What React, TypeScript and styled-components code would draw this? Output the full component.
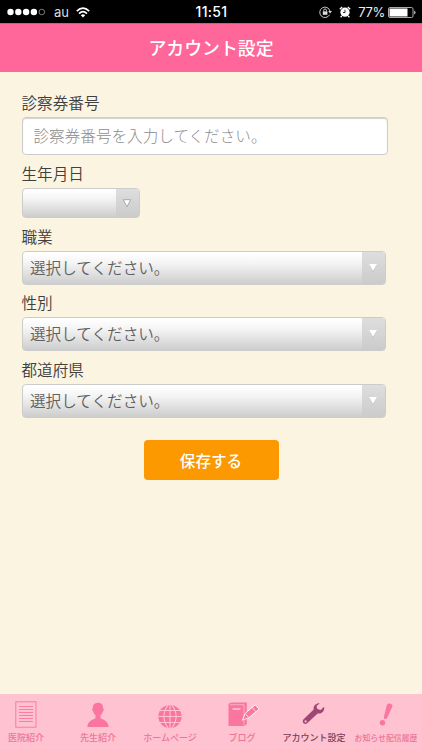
import React from 'react';
import styled, { createGlobalStyle } from 'styled-components';

const GlobalStyle = createGlobalStyle`
  * { box-sizing: border-box; }
  html, body { margin: 0; padding: 0; }
  body { background: #faf4e0; font-family: "Noto Sans CJK JP", sans-serif; }
`;

const Screen = styled.div`
  width: 422px;
  height: 750px;
  display: flex;
  flex-direction: column;
  overflow: hidden;
  background: #faf4e0;
`;

const StatusBar = styled.div`
  height: 23px;
  flex: none;
  display: grid;
  grid-template-columns: 1fr auto 1fr;
  align-items: center;
  padding: 1px 6px 0 7px;
  background: #000;
  color: #fff;
  font: 13px/20px Inter, "Liberation Sans", sans-serif;
`;

const StatusGroup = styled.div<{ $end?: boolean }>`
  display: flex;
  align-items: center;
  justify-content: ${(p) => (p.$end ? 'flex-end' : 'flex-start')};
`;

const Carrier = styled.span`
  margin: 0 7px 0 8px;
  font-size: 13px;
  color: #ddd;
`;

const Clock = styled.span`
  font-size: 14px;
  font-weight: 500;
  letter-spacing: 0.3px;
`;

const AlarmSlot = styled.span`
  display: flex;
  margin-left: 7px;
`;

const Percent = styled.span`
  margin: 0 3px 0 7px;
  font-size: 13px;
  color: #eee;
  letter-spacing: -0.3px;
`;

const Header = styled.header`
  height: 49px;
  flex: none;
  display: flex;
  align-items: center;
  justify-content: center;
  padding-bottom: 2px;
  background: #ff6699;
  border-top: 1px solid #d9577f;
`;

const Title = styled.h1`
  margin: 0;
  color: #fff;
  font-size: 17.9px;
  line-height: 26px;
  font-weight: 500;
`;

const Form = styled.main`
  flex: 1;
  display: flex;
  flex-direction: column;
  align-items: flex-start;
  padding: 18px 21.5px 0;
`;

const Label = styled.label<{ $gap?: number }>`
  height: 27px;
  margin-top: ${(p) => p.$gap ?? 0}px;
  font-size: 15.6px;
  line-height: 25px;
  font-weight: 350;
  color: #404040;
`;

const TextInput = styled.input`
  width: 366px;
  height: 38px;
  padding: 0 11px 2px;
  border: 1px solid #ccc;
  border-radius: 4px;
  outline: none;
  background: #fff;
  box-shadow: inset 0 1px 1px #d2d2d0;
  font: 300 15.6px/24px "Noto Sans CJK JP", sans-serif;
  color: #444;
  &::placeholder { color: #8c8c8c; opacity: 1; }
`;

const SelectBox = styled.div<{ $width: number; $height: number }>`
  width: ${(p) => p.$width}px;
  height: ${(p) => p.$height}px;
  display: flex;
  justify-content: space-between;
  overflow: hidden;
  border: 1px solid #ccc;
  border-radius: 4px;
  background: linear-gradient(#fff 5%, #f4f4f4 35%, #cdcdcd);
`;

const SelectText = styled.span`
  padding-left: 7.5px;
  font-size: 15.6px;
  line-height: 31px;
  font-weight: 350;
  color: #606060;
`;

const SelectArrow = styled.span`
  width: 23px;
  display: flex;
  align-items: center;
  justify-content: center;
  padding-right: 1px;
  background: linear-gradient(#dedede, #cbcbcb);
`;

const SaveButton = styled.button`
  width: 135px;
  height: 40px;
  margin: 22px 0 0 122px;
  padding: 0 0 1px;
  border: 0;
  border-radius: 4px;
  background: #fc9800;
  color: #fff;
  font: 500 15.6px/38px "Noto Sans CJK JP", sans-serif;
`;

const TabBar = styled.nav`
  height: 56px;
  flex: none;
  display: grid;
  grid-template-columns: repeat(6, 72px);
  margin-left: -10px;
  background: #ffc2d1;
`;

const Tab = styled.div<{ $active?: boolean }>`
  display: flex;
  flex-direction: column;
  align-items: center;
  color: ${(p) => (p.$active ? '#9c4873' : '#fa75a0')};
`;

const TabIcon = styled.div`
  height: 37px;
  padding-top: 7px;
  svg { display: block; }
`;

const TabLabel = styled.span<{ $size?: number; $active?: boolean }>`
  font-size: ${(p) => p.$size ?? 9}px;
  line-height: 13px;
  font-weight: 500;
  white-space: nowrap;
  color: ${(p) => (p.$active ? '#783e56' : '#ec7599')};
`;

const Signal = () => (
  <svg width="39" height="8" viewBox="0 0 39 8">
    {[3.5, 11.3, 19.1, 26.9].map((x) => <circle key={x} cx={x} cy="4" r="3.2" fill="#fff" />)}
    <circle cx="34.8" cy="4" r="2.8" fill="none" stroke="#aaa" strokeWidth=".7" />
  </svg>
);

const Wifi = () => (
  <svg width="14" height="11" viewBox="0 0 14 11" fill="none" stroke="#fff" strokeWidth="1.7">
    <path d="M.8 4.2Q7-2 13.2 4.2M3 6.6Q7 2.8 11 6.6" />
    <path d="M4.8 8.2Q7 6.2 9.2 8.2L7 10.5Z" fill="#fff" stroke="none" />
  </svg>
);

const RotationLock = () => (
  <svg width="13" height="12" viewBox="0 0 13 12" fill="none" stroke="#ddd">
    <path d="M10.6 8.7A5.2 5.2 0 1 1 11 5" strokeWidth=".9" />
    <path d="M9.3 5h3.6L11.1 7.4Z" fill="#ddd" stroke="none" />
    <path d="M4.7 5.7V4.4a1.4 1.4 0 0 1 2.8 0v1.3" strokeWidth=".9" />
    <rect x="3.8" y="5.4" width="4.6" height="3.4" fill="#ddd" stroke="none" />
  </svg>
);

const Alarm = () => (
  <svg width="12" height="12" viewBox="0 0 12 12">
    <circle cx="6" cy="6.2" r="4.6" fill="#fff" />
    <path d="M.8 3.2 3.2 1M11.2 3.2 8.8 1M2.8 10 1.6 11.3M9.2 10l1.2 1.3" stroke="#fff" strokeWidth="1.3" />
    <path d="M6 3.7v2.8H4" fill="none" stroke="#111" strokeWidth=".9" />
  </svg>
);

const Battery = () => (
  <svg width="28" height="11" viewBox="0 0 28 11">
    <rect x=".5" y=".5" width="24.5" height="10" rx="1.5" fill="none" stroke="#aaa" />
    <rect x="1.5" y="1.5" width="18" height="8" fill="#fff" />
    <path d="M26 3.6q1.6.4 1.6 1.9T26 7.4Z" fill="#aaa" />
  </svg>
);

const Triangle = ({ outlined }: { outlined?: boolean }) => (
  <svg width="10" height="10" viewBox="0 0 10 10">
    {outlined ? (
      <path d="M1.3 1.7h7.4L5 8.7Z" fill="#fff" stroke="#999" strokeWidth=".8" />
    ) : (
      <>
        <path d="M1.2 1.4h7.6L5 8.9Z" fill="#b2b2b2" />
        <path d="M1 1h8L5 7.9Z" fill="#fff" />
      </>
    )}
  </svg>
);

const DocumentIcon = () => (
  <svg width="22" height="28" viewBox="0 0 22 28" fill="none" stroke="currentColor">
    <rect x=".8" y=".8" width="20.2" height="25.4" strokeWidth=".9" />
    <path d="M4 5.5h14M4 8.5h14M4 11.5h14M4 14.5h14M4 17.5h14M4 20.5h14" strokeWidth=".9" />
  </svg>
);

const PersonIcon = () => (
  <svg width="22" height="28" viewBox="0 0 22 28" fill="currentColor">
    <path d="M11 1.8C7.6 1.8 5.7 4 5.9 7.2c-1.1.5-.8 2.6.3 3.2.5 1.8 1.4 3 2.3 3.9v2.6C6.7 18.7.5 19.1.4 26h21.2c-.1-6.9-6.3-7.3-8.1-9.1v-2.6c.9-.9 1.8-2.1 2.3-3.9 1.1-.6 1.4-2.7.3-3.2C16.3 4 14.4 1.8 11 1.8Z" />
  </svg>
);

const GlobeIcon = () => (
  <svg width="24" height="28" viewBox="0 0 24 28">
    <circle cx="12" cy="15.5" r="11.6" fill="currentColor" />
    <path d="M12 3.9v23.2M.4 15.5h23.2M2 9.5h20M2 21.5h20M10.2 3.9Q1.5 15.5 10.2 27.1M13.8 3.9Q22.5 15.5 13.8 27.1" fill="none" stroke="#ffc2d1" strokeWidth="1.1" />
  </svg>
);

const BlogIcon = () => (
  <svg width="36" height="28" viewBox="0 0 36 28">
    <path d="M5.5 2 8 1.5h14.8v21.7L20.5 25H4.5V3.5Z" fill="currentColor" />
    <path d="M6 3.7h14v21" fill="none" stroke="#ffc2d1" strokeWidth=".7" />
    <path d="M8.5 8h8" stroke="#fff0f4" strokeWidth="1" />
    <path d="M18.4 19.2 21.2 12.4 31.2 3.8 35 8.2 24.9 16.7Z" fill="currentColor" stroke="#fff0f4" strokeWidth="1" />
    <path d="M21.5 12.8 24.8 16.6M28.2 6.6l3.6 4.1" stroke="#fff0f4" strokeWidth=".8" />
  </svg>
);

const WrenchIcon = () => (
  <svg width="24" height="28" viewBox="0 0 24 28">
    <path d="M17.8 2.2c-3.7-.4-6.8 2.6-6.1 6.2L1.6 18.3c-2.6 2.6 1.2 6.3 3.8 3.8l10.3-9.6c3.7.7 7.3-2.4 6.4-6.8L18.7 9l-3.4-.9-.8-3.1Z" fill="currentColor" />
    <circle cx="3.6" cy="20.4" r="1.1" fill="#ffc2d1" />
  </svg>
);

const ExclamationIcon = () => (
  <svg width="16" height="28" viewBox="0 0 16 28" fill="currentColor">
    <path d="M8.8 4.2c1.1-3.2 6.4-1.7 5.5 1.6L8.9 17.3c-.8 1.5-3.4.8-3.1-1Z" />
    <circle cx="4.5" cy="21.7" r="2.7" />
  </svg>
);

interface SelectProps {
  width?: number;
  height?: number;
  text?: string;
  outlined?: boolean;
}

const Select = ({ width = 364, height = 34, text = '', outlined }: SelectProps) => (
  <SelectBox $width={width} $height={height}>
    <SelectText>{text}</SelectText>
    <SelectArrow><Triangle outlined={outlined} /></SelectArrow>
  </SelectBox>
);

const tabs = [
  { label: '医院紹介', icon: <DocumentIcon /> },
  { label: '先生紹介', icon: <PersonIcon /> },
  { label: 'ホームページ', icon: <GlobeIcon /> },
  { label: 'ブログ', icon: <BlogIcon /> },
  { label: 'アカウント設定', icon: <WrenchIcon />, active: true },
  { label: 'お知らせ配信履歴', icon: <ExclamationIcon />, size: 7.9 },
];

export default function App() {
  return (
    <>
      <GlobalStyle />
      <Screen>
        <StatusBar>
          <StatusGroup><Signal /><Carrier>au</Carrier><Wifi /></StatusGroup>
          <Clock>11:51</Clock>
          <StatusGroup $end><RotationLock /><AlarmSlot><Alarm /></AlarmSlot><Percent>77%</Percent><Battery /></StatusGroup>
        </StatusBar>
        <Header><Title>アカウント設定</Title></Header>
        <Form>
          <Label>診察券番号</Label>
          <TextInput placeholder="診察券番号を入力してください。" />
          <Label $gap={6}>生年月日</Label>
          <Select width={118} height={30} outlined />
          <Label $gap={6}>職業</Label>
          <Select text="選択してください。" />
          <Label $gap={5}>性別</Label>
          <Select text="選択してください。" />
          <Label $gap={6}>都道府県</Label>
          <Select text="選択してください。" />
          <SaveButton>保存する</SaveButton>
        </Form>
        <TabBar>
          {tabs.map((t) => (
            <Tab key={t.label} $active={t.active}>
              <TabIcon>{t.icon}</TabIcon>
              <TabLabel $size={t.size} $active={t.active}>{t.label}</TabLabel>
            </Tab>
          ))}
        </TabBar>
      </Screen>
    </>
  );
}
